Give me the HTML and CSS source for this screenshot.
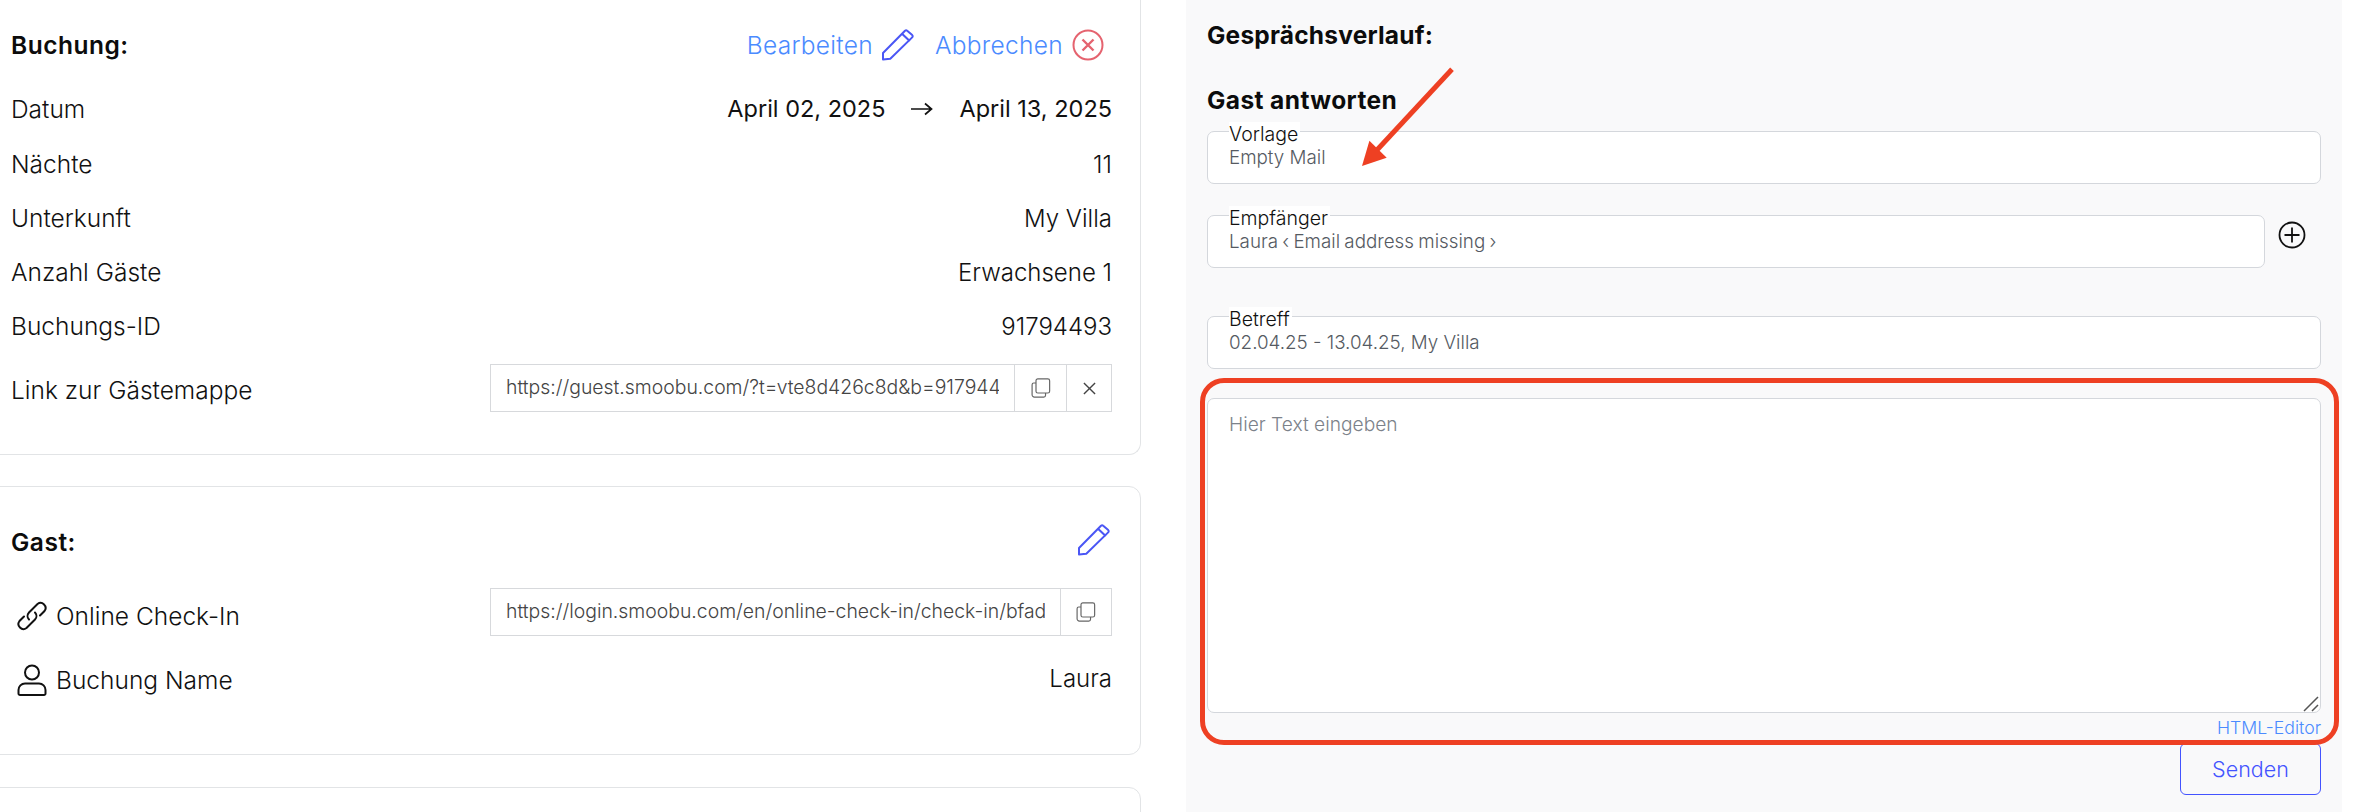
FILE: index.html
```html
<!DOCTYPE html>
<html lang="de">
<head>
<meta charset="utf-8">
<title>Buchung</title>
<link rel="stylesheet" href="styles.css">
</head>
<body>
<div class="page">
  <main class="left">
    <section class="card card-booking">
      <header class="card-head">
        <h2 class="card-title">Buchung:</h2>
        <div class="actions">
          <a class="action">Bearbeiten</a>
          <svg class="icon32" viewBox="0 0 32 32" fill="none" stroke="#4a56f5" stroke-width="2" stroke-linejoin="round"><path d="M1 30.500V24L23 1.800a1.600 1.600 0 0 1 2.200 0l5 4.300a1.600 1.600 0 0 1 0 2.300L8.300 29.700z"/><path d="M20 4.700l7.700 7.300"/></svg>
          <a class="action action-second">Abbrechen</a>
          <svg class="icon32" viewBox="0 0 32 32" fill="none" stroke="#e5636f" stroke-width="2"><circle cx="16" cy="16" r="14.500"/><path d="M10.500 10.500l11 11M21.500 10.500l-11 11" stroke-width="2.400"/></svg>
        </div>
      </header>
      <div class="row row-date">
        <span>Datum</span>
        <span class="dates"><span>April 02, 2025</span><svg class="date-arrow" viewBox="0 0 22 14" fill="none" stroke="#111" stroke-width="1.700"><path d="M0 7h20M14 1.500 20.500 7 14 12.500"/></svg><span>April 13, 2025</span></span>
      </div>
      <div class="row"><span>Nächte</span><span class="value">11</span></div>
      <div class="row"><span>Unterkunft</span><span class="value">My Villa</span></div>
      <div class="row"><span>Anzahl Gäste</span><span class="value">Erwachsene 1</span></div>
      <div class="row"><span>Buchungs-ID</span><span class="value">91794493</span></div>
      <div class="row row-link">
        <span class="link-label">Link zur Gästemappe</span>
        <div class="url-group">
          <div class="url-text">https://guest.smoobu.com/?t=vte8d426c8d&amp;b=91794493</div>
          <div class="url-btn btn-copy"><svg class="icon-copy" viewBox="0 0 22 22" fill="none" stroke="#666" stroke-width="1.300"><rect x="5.500" y="1" width="15" height="15.500" rx="2"/><path d="M5.500 5.500H3a1.800 1.800 0 0 0-1.800 1.800V18.500A2.500 2.500 0 0 0 3.700 21H14a2 2 0 0 0 2-2v-2.500"/></svg></div>
          <div class="url-btn btn-close"><svg class="icon-x" viewBox="0 0 14 14" fill="none" stroke="#444" stroke-width="1.500"><path d="M1 1l12 12M13 1 1 13"/></svg></div>
        </div>
      </div>
    </section>
    <section class="card card-guest">
      <header class="card-head guest-head">
        <h2 class="card-title">Gast:</h2>
        <svg class="icon32 pencil-end" viewBox="0 0 32 32" fill="none" stroke="#4a56f5" stroke-width="2" stroke-linejoin="round"><path d="M1 30.500V24L23 1.800a1.600 1.600 0 0 1 2.200 0l5 4.300a1.600 1.600 0 0 1 0 2.300L8.300 29.700z"/><path d="M20 4.700l7.700 7.300"/></svg>
      </header>
      <div class="row row-checkin">
        <span class="with-icon">
          <svg class="icon-lead" viewBox="0 0 32 32" fill="none" stroke="#111" stroke-width="2" stroke-linecap="round"><path d="M13 19.500a5 5 0 0 1 0-7L21.500 4a5 5 0 0 1 7 7L24 15.500"/><path d="M19 12.500a5 5 0 0 1 0 7L10.500 28a5 5 0 0 1-7-7L8 16.500"/></svg>
          Online Check-In
        </span>
        <div class="url-group">
          <div class="url-text">https://login.smoobu.com/en/online-check-in/check-in/bfad</div>
          <div class="url-btn btn-copy-solo"><svg class="icon-copy" viewBox="0 0 22 22" fill="none" stroke="#666" stroke-width="1.300"><rect x="5.500" y="1" width="15" height="15.500" rx="2"/><path d="M5.500 5.500H3a1.800 1.800 0 0 0-1.800 1.800V18.500A2.500 2.500 0 0 0 3.700 21H14a2 2 0 0 0 2-2v-2.500"/></svg></div>
        </div>
      </div>
      <div class="row row-name">
        <span class="with-icon">
          <svg class="icon-lead" viewBox="0 0 32 32" fill="none" stroke="#111" stroke-width="2"><circle cx="16" cy="8.500" r="7"/><path d="M9 19.500h14a6.500 6.500 0 0 1 6.500 6.500v3.500A1.500 1.500 0 0 1 28 31H4a1.500 1.500 0 0 1-1.500-1.500V26A6.500 6.500 0 0 1 9 19.500z"/></svg>
          Buchung Name
        </span>
        <span class="value">Laura</span>
      </div>
    </section>
    <section class="card card-next"></section>
  </main>

  <aside class="panel">
    <h2 class="panel-title history-title">Gesprächsverlauf:</h2>
    <h2 class="panel-title reply-title">Gast antworten</h2>
    <div class="field field-template">
      <span class="field-label">Vorlage</span>
      <span class="field-value">Empty Mail</span>
    </div>
    <div class="recipient-line">
      <div class="field field-recipient">
        <span class="field-label">Empfänger</span>
        <span class="field-value field-value-tight">Laura ‹ Email address missing ›</span>
      </div>
      <svg class="icon-plus" viewBox="0 0 28 28" fill="none" stroke="#111" stroke-width="1.800"><circle cx="14" cy="14" r="12.500"/><path d="M14 6.500v15M6.500 14h15"/></svg>
    </div>
    <div class="field field-subject">
      <span class="field-label">Betreff</span>
      <span class="field-value">02.04.25 - 13.04.25, My Villa</span>
    </div>
    <div class="message-wrap">
      <textarea class="message" placeholder="Hier Text eingeben"></textarea>
      <svg class="grip" viewBox="0 0 16 16" fill="none" stroke="#555" stroke-width="1.500"><path d="M1 15 15 1M9 15l6-6"/></svg>
    </div>
    <div class="editor-line"><a class="editor-link">HTML-Editor</a></div>
    <div class="send-line"><button class="send" type="button">Senden</button></div>
    <div class="mark-box"></div>
    <svg class="mark-arrow" viewBox="0 0 100 104" fill="none"><path d="M96 3.300 21 84" stroke="#ee4023" stroke-width="5"/><path d="M6 100 13.400 74.700 30.700 91.700z" fill="#ee4023"/></svg>
  </aside>
</div>
</body>
</html>
```
FILE: styles.css
```css
* { box-sizing: border-box; }
html, body { margin: 0; padding: 0; background: #fff; }
body {
  font-family: "Inter", "Liberation Sans", sans-serif;
  font-weight: 300;
  color: #111;
  font-size: 24.500px;
  width: 2358px;
  height: 812px;
  overflow: hidden;
}
.page { display: flex; align-items: flex-start; height: 812px; overflow: hidden; }
.left { width: 1186px; flex: none; padding-right: 45px; }
.card {
  margin-left: -20px;
  padding: 0 28px 0 30px;
  background: #fff;
  border: 1px solid #e2e4e6;
  border-radius: 12px;
}
.card-booking { margin-top: -20px; height: 475px; padding-top: 38px; border-top: 0; margin-bottom: 31px; }
.card-guest { height: 269px; margin-bottom: 32px; }
.card-next { height: 60px; }
.card-head { display: flex; justify-content: space-between; align-items: center; height: 54px; }
.card-title { margin: 0; font-size: 24.500px; font-weight: 600; letter-spacing: 0.500px; color: #0c0c0c; }
.actions { display: flex; align-items: center; padding-right: 8px; color: #4b8bff; }
.action { color: #4b8bff; letter-spacing: 0.300px; }
.action-second { margin-left: 21px; }
.icon32 { width: 32px; height: 32px; flex: none; margin-left: 9px; }
.row { display: flex; justify-content: space-between; align-items: center; height: 54px; }
.value { font-size: 24px; }
.row-date { height: 57px; margin-top: 8px; }
.dates { display: flex; align-items: center; font-size: 23.500px; font-weight: 400; }
.date-arrow { width: 22px; height: 14px; margin: 0 26px; flex: none; }
.row-link { align-items: flex-start; padding-top: 11px; height: 58px; }
.link-label { padding-top: 11px; }
.url-group { display: flex; width: 622px; height: 48px; border: 1.500px solid #d7d9dc; font-size: 19.400px; font-weight: 300; color: #444; }
.url-text { flex: 1; min-width: 0; margin: 0 15px; line-height: 45px; overflow: hidden; white-space: nowrap; }
.url-btn { flex: none; display: flex; align-items: center; justify-content: center; border-left: 1.500px solid #d7d9dc; }
.btn-copy { width: 52px; }
.btn-close { width: 45px; }
.btn-copy-solo { width: 51px; }
.icon-copy { width: 20px; height: 20px; }
.icon-x { width: 13px; height: 13px; }
.guest-head { margin-top: 27px; height: 56px; }
.pencil-end { margin: 0 2px 5px 0; }
.row-checkin { margin-top: 18px; height: 47px; }
.row-name { margin-top: 21px; height: 44px; }
.with-icon { display: flex; align-items: center; gap: 8px; padding-top: 4px; }
.row-checkin .with-icon { padding-top: 8px; }
.icon-lead { width: 32px; height: 32px; flex: none; margin-left: 5px; }

.panel {
  position: relative;
  width: 1156px;
  height: 812px;
  flex: none;
  padding: 0 21px;
  background: #f9f9fa;
}
.panel-title { margin: 0; font-size: 24.500px; font-weight: 700; letter-spacing: 0.400px; color: #0c0c0c; line-height: 30px; padding-top: 20px; }
.history-title { letter-spacing: 0.200px; }
.reply-title { padding-top: 35px; }
.field {
  position: relative;
  height: 53px;
  background: #fff;
  border: 1.500px solid #d4d7dc;
  border-radius: 7px;
  display: flex;
  align-items: flex-end;
  padding: 0 21px 13px;
  font-size: 18.800px;
}
.field-label {
  position: absolute;
  left: 21px;
  top: -10px;
  padding: 0 2px 0 0;
  background: #fff;
  line-height: 24px;
  font-size: 19.500px;
  color: #111;
}
.field-value { color: #555a62; line-height: 24px; }
.field-value-tight { word-spacing: -1px; }
.field-template { margin-top: 16px; }
.recipient-line { display: flex; align-items: center; margin-top: 31px; }
.field-recipient { flex: 1; }
.icon-plus { width: 28px; height: 28px; flex: none; margin: 0 15px 0 13px; position: relative; top: -7px; }
.field-subject { margin-top: 48px; }
.message-wrap { position: relative; margin-top: 29px; }
.message {
  display: block;
  width: 100%;
  height: 315px;
  padding: 13px 21px;
  background: #fff;
  border: 1.500px solid #d4d7dc;
  border-radius: 7px;
  font: 300 19.200px "Inter", sans-serif;
  color: #555;
  outline: 0;
  resize: none;
}
.message::placeholder { color: #7c828a; opacity: 1; }
.grip { position: absolute; right: 2px; bottom: 1px; width: 16px; height: 16px; }
.editor-line { display: flex; justify-content: flex-end; height: 28px; align-items: center; font-size: 17.700px; color: #4b8bff; }
.send-line { display: flex; justify-content: flex-end; padding-top: 2px; }
.send {
  width: 141px;
  height: 52px;
  background: transparent;
  border: 1.500px solid #4353ff;
  border-radius: 6px;
  color: #4353ff;
  font: 300 21.500px "Inter", sans-serif;
}
.mark-box {
  position: absolute;
  left: 14px;
  top: 378px;
  width: 1139px;
  height: 367px;
  border: 5px solid #ee4023;
  border-radius: 24px;
}
.mark-arrow { position: absolute; left: 170px; top: 66px; width: 100px; height: 104px; }
```
